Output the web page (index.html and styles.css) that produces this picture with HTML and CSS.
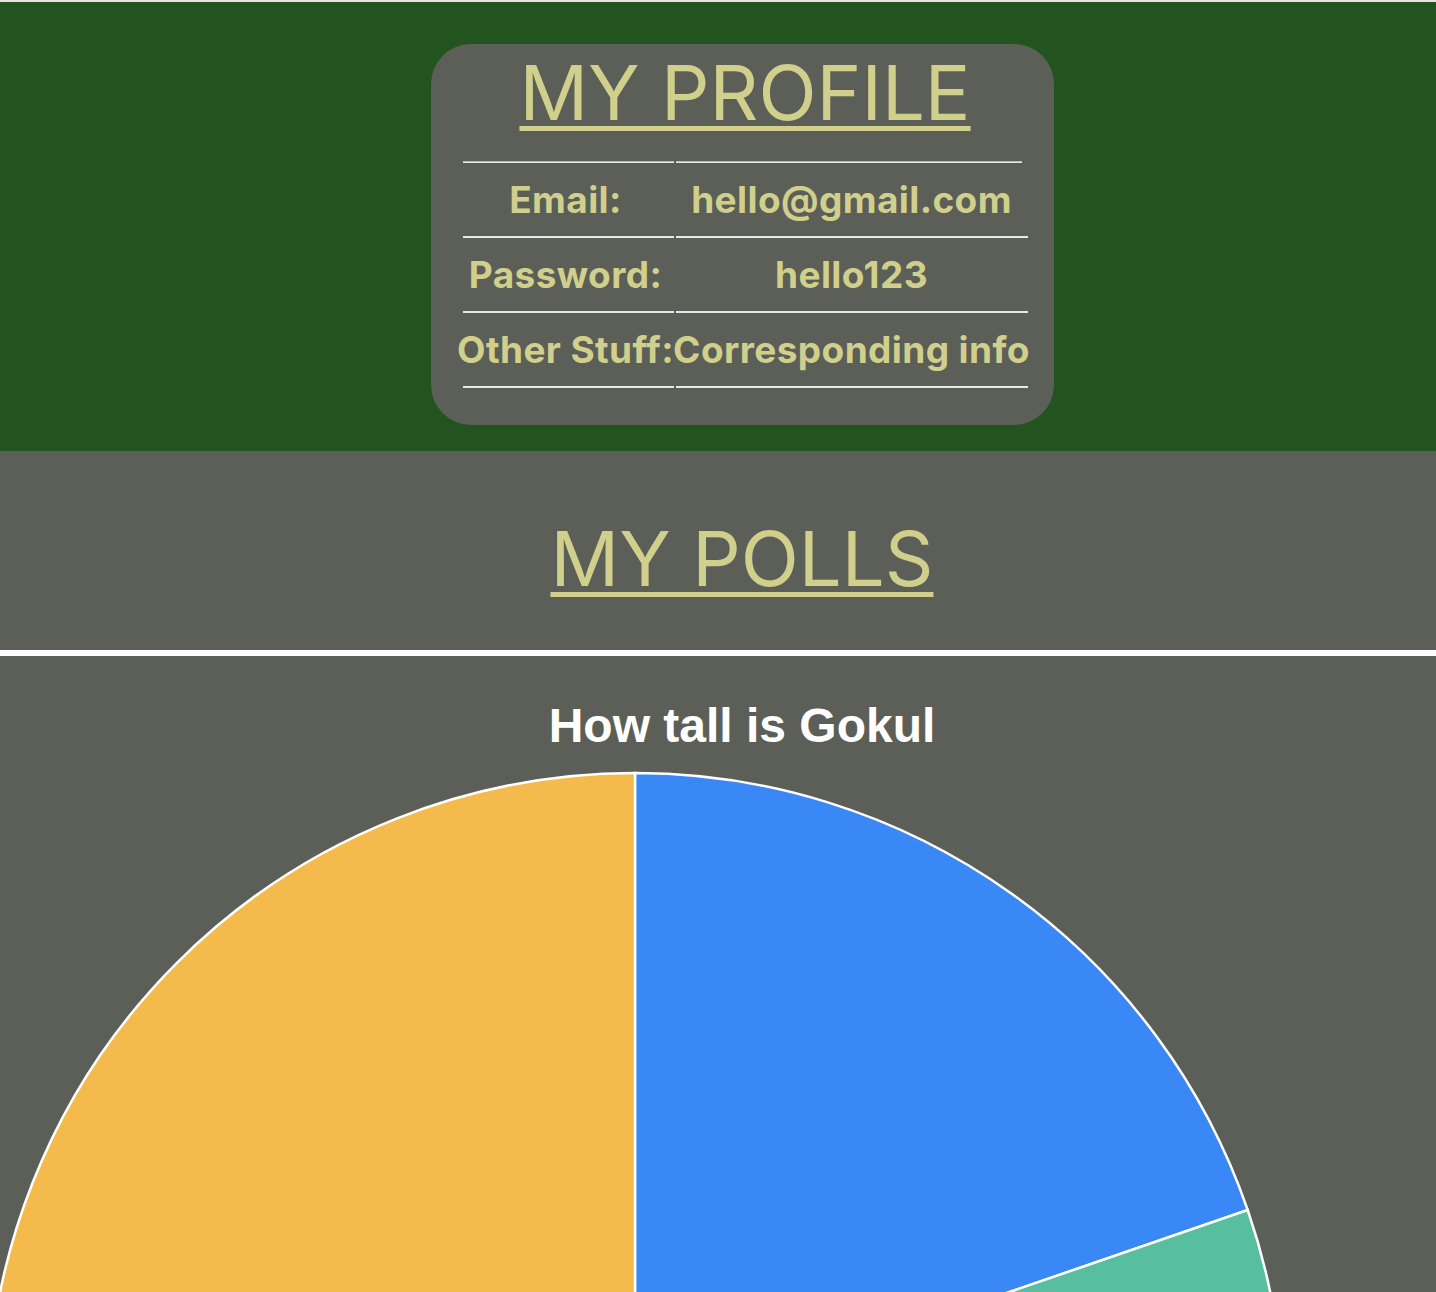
FILE: index.html
```html
<!DOCTYPE html>
<html lang="en">
<head>
<meta charset="utf-8">
<title>My Profile</title>
<link rel="stylesheet" href="styles.css">
</head>
<body>
<div class="page">
  <div class="topbar"></div>
  <section class="profile">
    <div class="card">
      <h1 class="heading">MY PROFILE</h1>
      <div class="info">
        <div class="rule"><span class="rule-a"></span><span class="rule-b"></span></div>
        <div class="cell key">Email:</div>
        <div class="cell val">hello@gmail.com</div>
        <div class="cell key">Password:</div>
        <div class="cell val">hello123</div>
        <div class="cell key">Other Stuff:</div>
        <div class="cell val">Corresponding info</div>
      </div>
    </div>
  </section>
  <section class="polls-head">
    <h2 class="heading">MY POLLS</h2>
  </section>
  <section class="chart">
    <h3 class="chart-title">How tall is Gokul</h3>
    <svg class="pie" width="1484" height="540" viewBox="0 0 1484 540">
      <path d="M635 650 L635 2 A648 648 0 0 1 1247.7 439 Z" fill="#3a88f5" stroke="#ffffff" stroke-width="2.5"/>
      <path d="M635 650 L1247.7 439 A648 648 0 0 1 635 1298 Z" fill="#57bf9f" stroke="#ffffff" stroke-width="2.5"/>
      <path d="M635 650 L635 1298 A648 648 0 0 1 635 2 Z" fill="#f4ba4b" stroke="#ffffff" stroke-width="2.5"/>
    </svg>
  </section>
</div>
</body>
</html>
```

FILE: styles.css
```css
html, body {
  margin: 0;
  padding: 0;
}
body {
  overflow: hidden;
  background: #5c5f58;
}
.page {
  width: 1484px;
}
.topbar {
  height: 2px;
  background: #e4e4e4;
}
.profile {
  background: #23541f;
  height: 449px;
  box-sizing: border-box;
  padding-top: 42px;
  display: flex;
  justify-content: center;
}
.card {
  width: 623px;
  height: 381px;
  box-sizing: border-box;
  background: #5c5f58;
  border-radius: 40px;
  padding: 10px 26px 0 32px;
}
.heading {
  margin: 0;
  font-family: Inter, "Open Sans", sans-serif;
  font-weight: 400;
  font-size: 76px;
  line-height: 76px;
  height: 76px;
  color: #d0cf8c;
  text-align: center;
  text-decoration: underline;
  text-decoration-thickness: 5px;
  text-underline-offset: 6px;
}
.info {
  margin-top: 31px;
  display: grid;
  grid-template-columns: 211px 352px;
  column-gap: 2px;
  font-family: Inter, "Noto Sans", sans-serif;
  font-weight: 700;
  font-size: 37px;
  letter-spacing: 0.4px;
  color: #d0cf8c;
}
.rule {
  grid-column: 1 / -1;
  display: flex;
  gap: 2px;
}
.rule span {
  height: 2px;
  background: linear-gradient(#bdbdbd 50%, #e6e6e6 50%);
}
.rule-a { width: 211px; }
.rule-b { width: 346px; }
.cell {
  height: 73px;
  border-bottom: 2px solid #e8e8e8;
  display: flex;
  align-items: center;
  justify-content: center;
  white-space: nowrap;
}
.key {
  padding-right: 5px;
}
.polls-head {
  height: 205px;
  box-sizing: border-box;
  padding-top: 69px;
  border-bottom: 6px solid #ffffff;
}
.chart {
  padding-top: 46px;
}
.chart-title {
  margin: 0;
  font-family: "Liberation Sans", Arial, sans-serif;
  font-weight: 700;
  font-size: 48px;
  line-height: 48px;
  color: #ffffff;
  text-align: center;
}
.pie {
  display: block;
  margin-top: 21px;
}
```
